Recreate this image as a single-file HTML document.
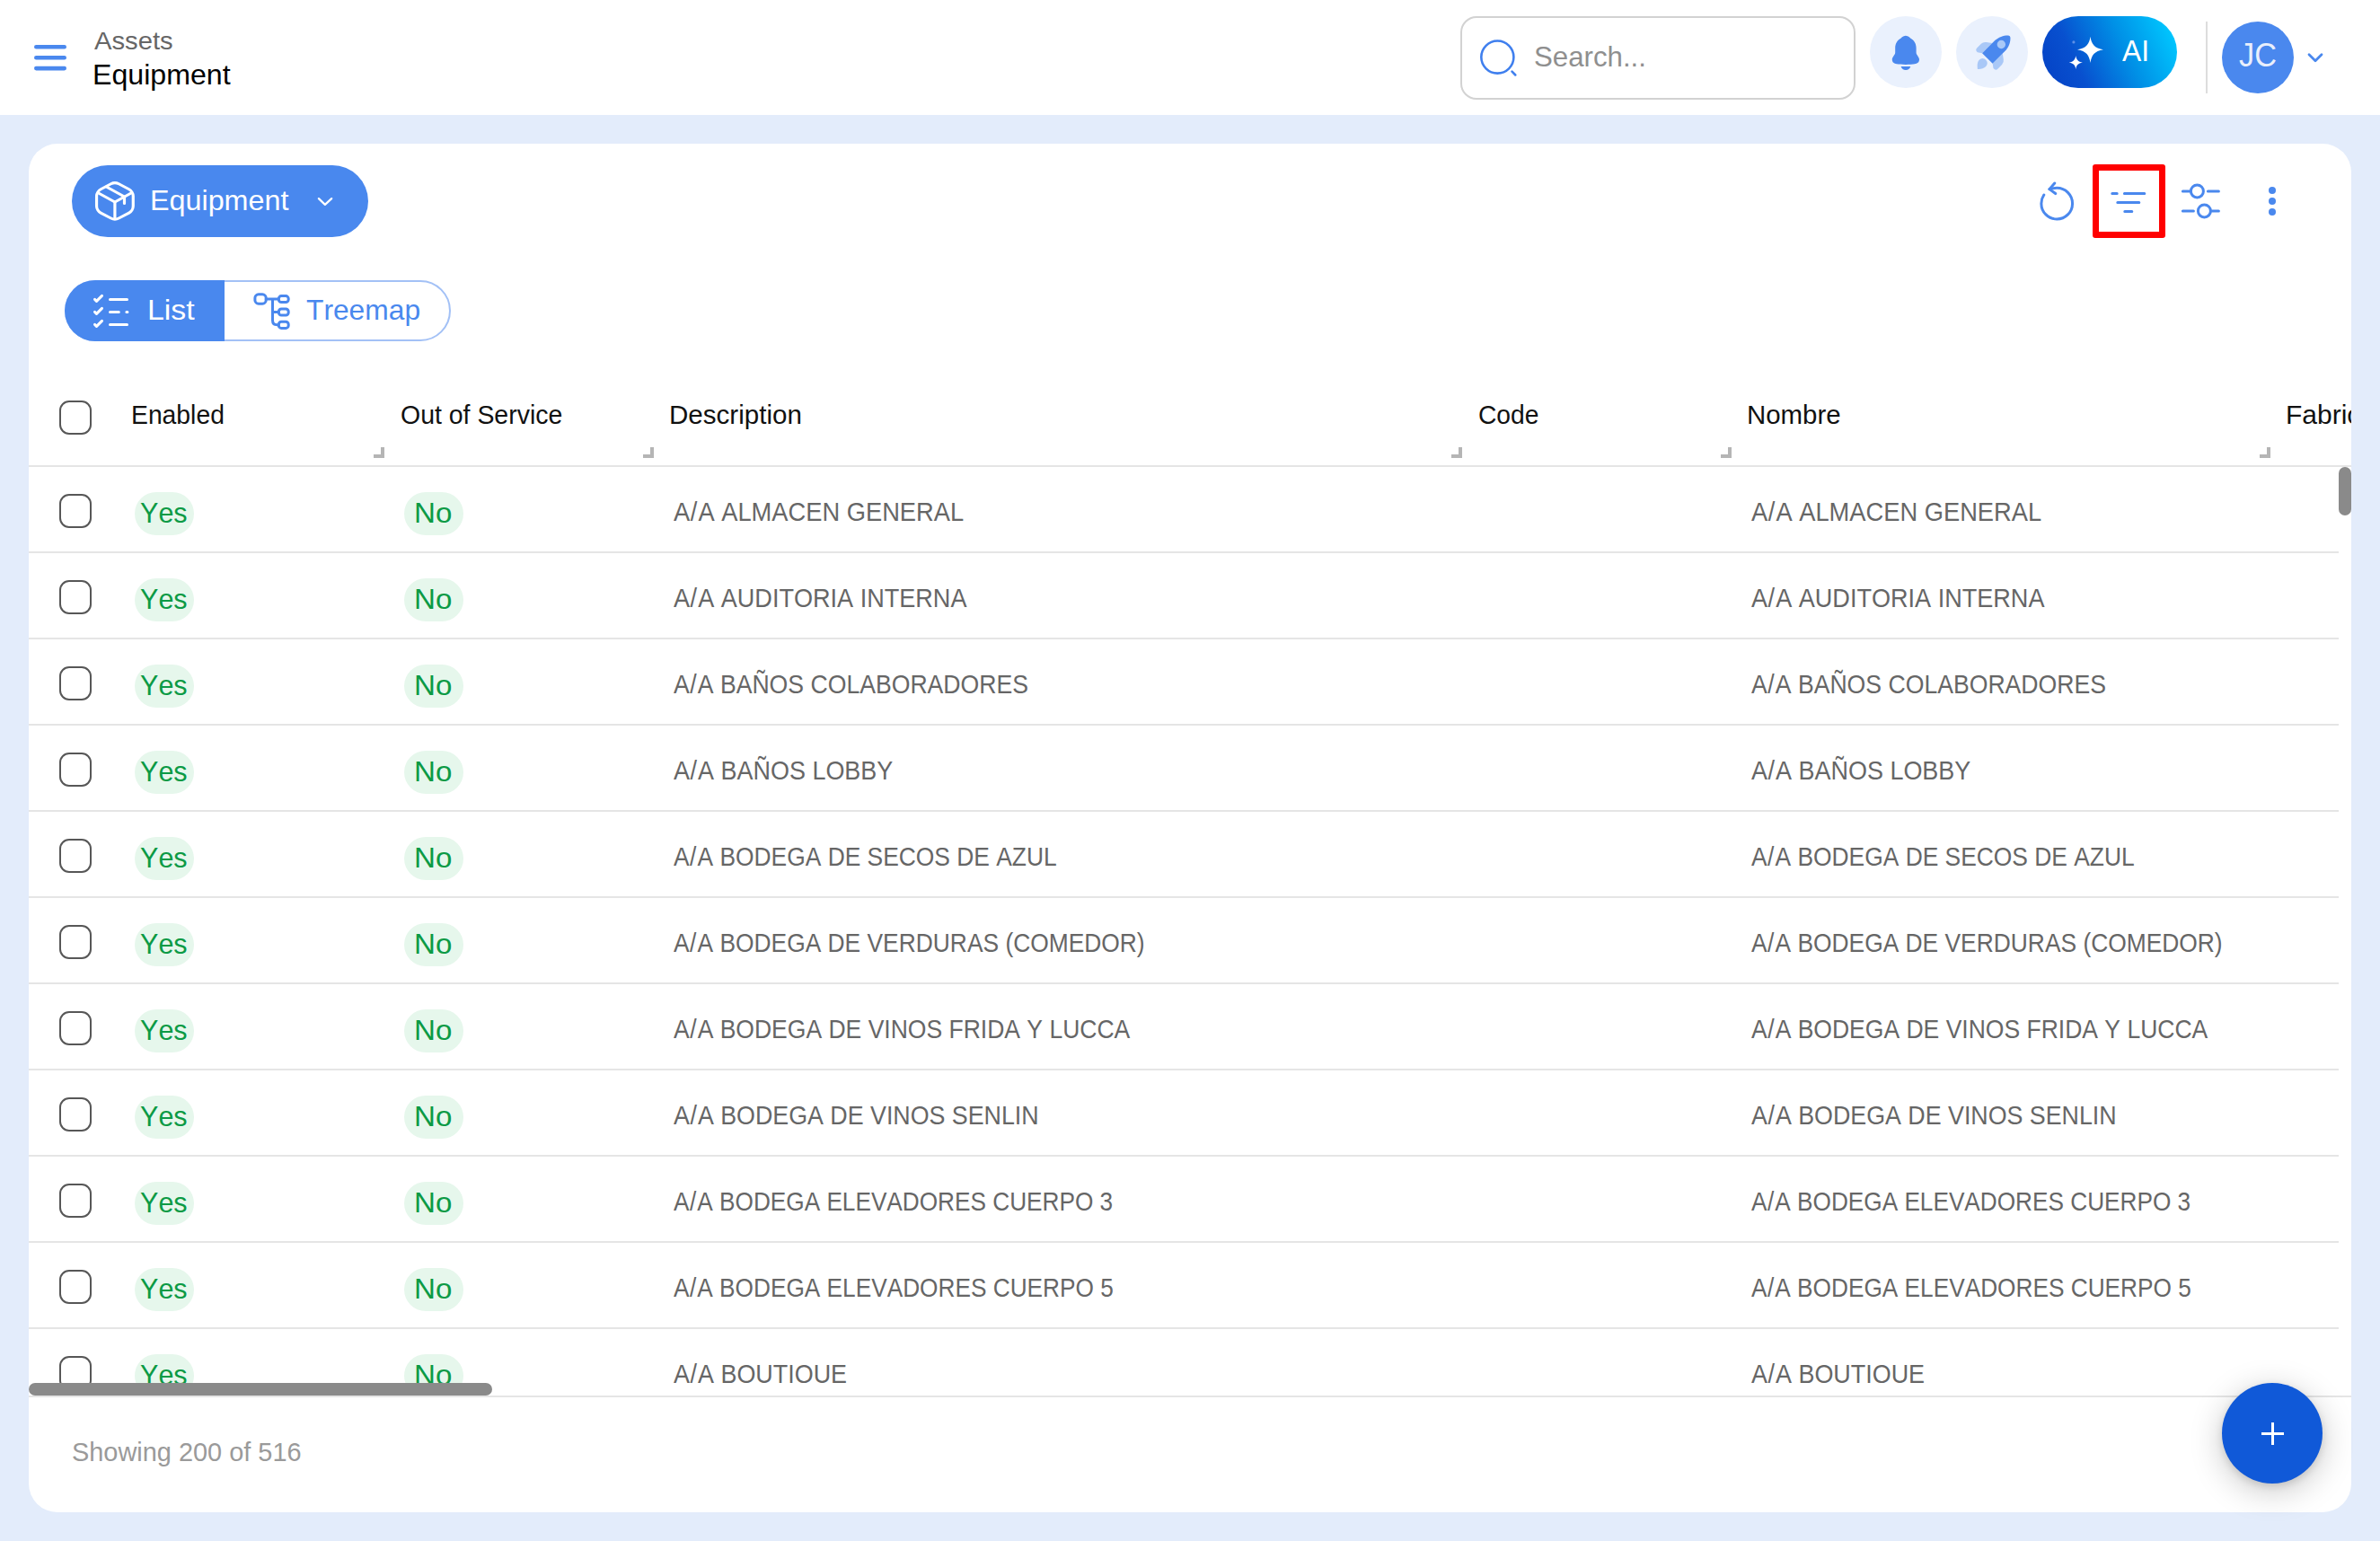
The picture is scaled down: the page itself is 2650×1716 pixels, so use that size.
<!DOCTYPE html>
<html><head><meta charset="utf-8">
<style>
html,body{margin:0;padding:0}
body{width:2650px;height:1716px;position:relative;overflow:hidden;background:#e3ecfb;font-family:"Liberation Sans",sans-serif}
.a{position:absolute}
.t{position:absolute;line-height:1;white-space:nowrap;transform-origin:0 0;font-kerning:none}
.cb{position:absolute;left:66px;width:36px;height:37.6px;box-sizing:border-box;border:2px solid #575757;border-radius:11px;background:#fff}
.pill{position:absolute;width:66px;height:48px;border-radius:24px;background:#e6f7ec}
.rb{position:absolute;left:0;width:2572px;height:2px;background:#e5e5e5}
</style></head>
<body>
<!-- top header -->
<div class="a" style="left:0;top:0;width:2650px;height:128px;background:#fff"></div>
<div class="a" style="left:1626px;top:18px;width:440px;height:93px;box-sizing:border-box;border:2px solid #d2d2d2;border-radius:18px;background:#fff"></div>
<div class="a" style="left:2082px;top:18px;width:80px;height:80px;border-radius:40px;background:#eaf1fd"></div>
<div class="a" style="left:2178px;top:18px;width:80px;height:80px;border-radius:40px;background:#eaf1fd"></div>
<div class="a" style="left:2274px;top:18px;width:150px;height:80px;border-radius:40px;background:linear-gradient(65deg,#0440c4 0%,#0850cf 27%,#0090e6 60%,#00c8ff 94%)"></div>
<div class="a" style="left:2456px;top:24px;width:2px;height:80px;background:#dddddd"></div>
<div class="a" style="left:2474px;top:24px;width:80px;height:80px;border-radius:40px;background:#4a88ee"></div>

<!-- card -->
<div class="a" style="left:32px;top:160px;width:2586px;height:1524px;border-radius:32px;background:#fff"></div>
<div class="a" style="left:80px;top:184px;width:330px;height:80px;border-radius:40px;background:#4988ee"></div>
<div class="a" style="left:72px;top:312px;width:430px;height:68px;box-sizing:border-box;border:2px solid #a3c1f6;border-radius:34px;background:#fff"></div>
<div class="a" style="left:72px;top:312px;width:178px;height:68px;border-radius:34px 0 0 34px;background:#4988ee"></div>

<!-- table header -->
<div class="cb" style="top:446px"></div>
<div class="a" style="left:32px;top:518px;width:2586px;height:2px;background:#e5e5e5"></div>

<!-- table body (clipped) -->
<div class="a" style="left:32px;top:520px;width:2572px;height:1020px;overflow:hidden">
 <div class="a" style="left:-32px;top:-520px;width:2650px;height:1716px">
  <div class="rb" style="left:32px;top:614px"></div>
  <div class="rb" style="left:32px;top:710px"></div>
  <div class="rb" style="left:32px;top:806px"></div>
  <div class="rb" style="left:32px;top:902px"></div>
  <div class="rb" style="left:32px;top:998px"></div>
  <div class="rb" style="left:32px;top:1094px"></div>
  <div class="rb" style="left:32px;top:1190px"></div>
  <div class="rb" style="left:32px;top:1286px"></div>
  <div class="rb" style="left:32px;top:1382px"></div>
  <div class="rb" style="left:32px;top:1478px"></div>
  <div class="cb" style="top:550px"></div><div class="pill" style="left:150px;top:548px"></div><div class="pill" style="left:450px;top:548px"></div>
  <div class="cb" style="top:646px"></div><div class="pill" style="left:150px;top:644px"></div><div class="pill" style="left:450px;top:644px"></div>
  <div class="cb" style="top:742px"></div><div class="pill" style="left:150px;top:740px"></div><div class="pill" style="left:450px;top:740px"></div>
  <div class="cb" style="top:838px"></div><div class="pill" style="left:150px;top:836px"></div><div class="pill" style="left:450px;top:836px"></div>
  <div class="cb" style="top:934px"></div><div class="pill" style="left:150px;top:932px"></div><div class="pill" style="left:450px;top:932px"></div>
  <div class="cb" style="top:1030px"></div><div class="pill" style="left:150px;top:1028px"></div><div class="pill" style="left:450px;top:1028px"></div>
  <div class="cb" style="top:1126px"></div><div class="pill" style="left:150px;top:1124px"></div><div class="pill" style="left:450px;top:1124px"></div>
  <div class="cb" style="top:1222px"></div><div class="pill" style="left:150px;top:1220px"></div><div class="pill" style="left:450px;top:1220px"></div>
  <div class="cb" style="top:1318px"></div><div class="pill" style="left:150px;top:1316px"></div><div class="pill" style="left:450px;top:1316px"></div>
  <div class="cb" style="top:1414px"></div><div class="pill" style="left:150px;top:1412px"></div><div class="pill" style="left:450px;top:1412px"></div>
  <div class="cb" style="top:1510px"></div><div class="pill" style="left:150px;top:1508px"></div><div class="pill" style="left:450px;top:1508px"></div>
<span class=t style="left:750.4px;top:554.8px;font-size:30px;color:#666666;transform:scaleX(0.9096);">A<span style="margin:0 1.2px 0 0.6px">/</span>A ALMACEN GENERAL</span>
<span class=t style="left:1950.4px;top:554.8px;font-size:30px;color:#666666;transform:scaleX(0.9096);">A<span style="margin:0 1.2px 0 0.6px">/</span>A ALMACEN GENERAL</span>
<span class=t style="left:156.4px;top:554.8px;font-size:32px;color:#0c9a45;transform:scaleX(0.9547);">Yes</span>
<span class=t style="left:461.4px;top:554.8px;font-size:32px;color:#0c9a45;transform:scaleX(1.0351);">No</span>
<span class=t style="left:750.4px;top:650.8px;font-size:30px;color:#666666;transform:scaleX(0.9022);">A<span style="margin:0 1.2px 0 0.6px">/</span>A AUDITORIA INTERNA</span>
<span class=t style="left:1950.4px;top:650.8px;font-size:30px;color:#666666;transform:scaleX(0.9022);">A<span style="margin:0 1.2px 0 0.6px">/</span>A AUDITORIA INTERNA</span>
<span class=t style="left:156.4px;top:650.8px;font-size:32px;color:#0c9a45;transform:scaleX(0.9547);">Yes</span>
<span class=t style="left:461.4px;top:650.8px;font-size:32px;color:#0c9a45;transform:scaleX(1.0351);">No</span>
<span class=t style="left:750.4px;top:746.8px;font-size:30px;color:#666666;transform:scaleX(0.8872);">A<span style="margin:0 1.2px 0 0.6px">/</span>A BAÑOS COLABORADORES</span>
<span class=t style="left:1950.4px;top:746.8px;font-size:30px;color:#666666;transform:scaleX(0.8872);">A<span style="margin:0 1.2px 0 0.6px">/</span>A BAÑOS COLABORADORES</span>
<span class=t style="left:156.4px;top:746.8px;font-size:32px;color:#0c9a45;transform:scaleX(0.9547);">Yes</span>
<span class=t style="left:461.4px;top:746.8px;font-size:32px;color:#0c9a45;transform:scaleX(1.0351);">No</span>
<span class=t style="left:750.4px;top:842.8px;font-size:30px;color:#666666;transform:scaleX(0.8985);">A<span style="margin:0 1.2px 0 0.6px">/</span>A BAÑOS LOBBY</span>
<span class=t style="left:1950.4px;top:842.8px;font-size:30px;color:#666666;transform:scaleX(0.8985);">A<span style="margin:0 1.2px 0 0.6px">/</span>A BAÑOS LOBBY</span>
<span class=t style="left:156.4px;top:842.8px;font-size:32px;color:#0c9a45;transform:scaleX(0.9547);">Yes</span>
<span class=t style="left:461.4px;top:842.8px;font-size:32px;color:#0c9a45;transform:scaleX(1.0351);">No</span>
<span class=t style="left:750.4px;top:938.8px;font-size:30px;color:#666666;transform:scaleX(0.8793);">A<span style="margin:0 1.2px 0 0.6px">/</span>A BODEGA DE SECOS DE AZUL</span>
<span class=t style="left:1950.4px;top:938.8px;font-size:30px;color:#666666;transform:scaleX(0.8793);">A<span style="margin:0 1.2px 0 0.6px">/</span>A BODEGA DE SECOS DE AZUL</span>
<span class=t style="left:156.4px;top:938.8px;font-size:32px;color:#0c9a45;transform:scaleX(0.9547);">Yes</span>
<span class=t style="left:461.4px;top:938.8px;font-size:32px;color:#0c9a45;transform:scaleX(1.0351);">No</span>
<span class=t style="left:750.4px;top:1034.8px;font-size:30px;color:#666666;transform:scaleX(0.8790);">A<span style="margin:0 1.2px 0 0.6px">/</span>A BODEGA DE VERDURAS (COMEDOR)</span>
<span class=t style="left:1950.4px;top:1034.8px;font-size:30px;color:#666666;transform:scaleX(0.8790);">A<span style="margin:0 1.2px 0 0.6px">/</span>A BODEGA DE VERDURAS (COMEDOR)</span>
<span class=t style="left:156.4px;top:1034.8px;font-size:32px;color:#0c9a45;transform:scaleX(0.9547);">Yes</span>
<span class=t style="left:461.4px;top:1034.8px;font-size:32px;color:#0c9a45;transform:scaleX(1.0351);">No</span>
<span class=t style="left:750.4px;top:1130.8px;font-size:30px;color:#666666;transform:scaleX(0.8835);">A<span style="margin:0 1.2px 0 0.6px">/</span>A BODEGA DE VINOS FRIDA Y LUCCA</span>
<span class=t style="left:1950.4px;top:1130.8px;font-size:30px;color:#666666;transform:scaleX(0.8835);">A<span style="margin:0 1.2px 0 0.6px">/</span>A BODEGA DE VINOS FRIDA Y LUCCA</span>
<span class=t style="left:156.4px;top:1130.8px;font-size:32px;color:#0c9a45;transform:scaleX(0.9547);">Yes</span>
<span class=t style="left:461.4px;top:1130.8px;font-size:32px;color:#0c9a45;transform:scaleX(1.0351);">No</span>
<span class=t style="left:750.4px;top:1226.8px;font-size:30px;color:#666666;transform:scaleX(0.8932);">A<span style="margin:0 1.2px 0 0.6px">/</span>A BODEGA DE VINOS SENLIN</span>
<span class=t style="left:1950.4px;top:1226.8px;font-size:30px;color:#666666;transform:scaleX(0.8932);">A<span style="margin:0 1.2px 0 0.6px">/</span>A BODEGA DE VINOS SENLIN</span>
<span class=t style="left:156.4px;top:1226.8px;font-size:32px;color:#0c9a45;transform:scaleX(0.9547);">Yes</span>
<span class=t style="left:461.4px;top:1226.8px;font-size:32px;color:#0c9a45;transform:scaleX(1.0351);">No</span>
<span class=t style="left:750.4px;top:1322.8px;font-size:30px;color:#666666;transform:scaleX(0.8730);">A<span style="margin:0 1.2px 0 0.6px">/</span>A BODEGA ELEVADORES CUERPO 3</span>
<span class=t style="left:1950.4px;top:1322.8px;font-size:30px;color:#666666;transform:scaleX(0.8730);">A<span style="margin:0 1.2px 0 0.6px">/</span>A BODEGA ELEVADORES CUERPO 3</span>
<span class=t style="left:156.4px;top:1322.8px;font-size:32px;color:#0c9a45;transform:scaleX(0.9547);">Yes</span>
<span class=t style="left:461.4px;top:1322.8px;font-size:32px;color:#0c9a45;transform:scaleX(1.0351);">No</span>
<span class=t style="left:750.4px;top:1418.8px;font-size:30px;color:#666666;transform:scaleX(0.8741);">A<span style="margin:0 1.2px 0 0.6px">/</span>A BODEGA ELEVADORES CUERPO 5</span>
<span class=t style="left:1950.4px;top:1418.8px;font-size:30px;color:#666666;transform:scaleX(0.8741);">A<span style="margin:0 1.2px 0 0.6px">/</span>A BODEGA ELEVADORES CUERPO 5</span>
<span class=t style="left:156.4px;top:1418.8px;font-size:32px;color:#0c9a45;transform:scaleX(0.9547);">Yes</span>
<span class=t style="left:461.4px;top:1418.8px;font-size:32px;color:#0c9a45;transform:scaleX(1.0351);">No</span>
<span class=t style="left:750.4px;top:1514.8px;font-size:30px;color:#666666;transform:scaleX(0.8972);">A<span style="margin:0 1.2px 0 0.6px">/</span>A BOUTIQUE</span>
<span class=t style="left:1950.4px;top:1514.8px;font-size:30px;color:#666666;transform:scaleX(0.8972);">A<span style="margin:0 1.2px 0 0.6px">/</span>A BOUTIQUE</span>
<span class=t style="left:156.4px;top:1514.8px;font-size:32px;color:#0c9a45;transform:scaleX(0.9547);">Yes</span>
<span class=t style="left:461.4px;top:1514.8px;font-size:32px;color:#0c9a45;transform:scaleX(1.0351);">No</span>
 </div>
</div>
<!-- scrollbars -->
<div class="a" style="left:2604px;top:520px;width:14px;height:54px;border-radius:7px;background:#8a8a8a"></div>
<div class="a" style="left:32px;top:1540px;width:516px;height:14px;border-radius:7px;background:#8a8a8a"></div>
<div class="a" style="left:32px;top:1554px;width:2586px;height:2px;background:#e5e5e5"></div>


<span class=t style="left:104.6px;top:31.7px;font-size:28px;color:#666666;transform:scaleX(1.0434);">Assets</span>
<span class=t style="left:102.9px;top:66.7px;font-size:32px;color:#000000;transform:scaleX(1.0040);">Equipment</span>
<span class=t style="left:1708.0px;top:46.6px;font-size:32px;color:#8f8f8f;transform:scaleX(0.9756);">Search...</span>
<span class=t style="left:2363.3px;top:39.2px;font-size:34px;color:#ffffff;transform:scaleX(0.9345);">AI</span>
<span class=t style="left:2493.0px;top:43.8px;font-size:36px;color:#e9effc;transform:scaleX(0.9524);">JC</span>
<span class=t style="left:166.6px;top:206.8px;font-size:32px;color:#ffffff;transform:scaleX(1.0093);">Equipment</span>
<span class=t style="left:163.6px;top:328.6px;font-size:32px;color:#ffffff;transform:scaleX(1.0574);">List</span>
<span class=t style="left:341.0px;top:328.6px;font-size:32px;color:#4988ee;transform:scaleX(0.9921);">Treemap</span>
<span class=t style="left:145.7px;top:446.5px;font-size:30px;color:#111111;transform:scaleX(0.9434);">Enabled</span>
<span class=t style="left:446.0px;top:446.5px;font-size:30px;color:#111111;transform:scaleX(0.9484);">Out of Service</span>
<span class=t style="left:745.3px;top:446.5px;font-size:30px;color:#111111;transform:scaleX(0.9856);">Description</span>
<span class=t style="left:1645.7px;top:446.5px;font-size:30px;color:#111111;transform:scaleX(0.9400);">Code</span>
<span class=t style="left:1945.0px;top:446.5px;font-size:30px;color:#111111;transform:scaleX(0.9808);">Nombre</span>
<span class=t style="left:2545.0px;top:446.5px;font-size:30px;color:#111111;">Fabricante</span>
<span class=t style="left:79.8px;top:1602.3px;font-size:30px;color:#9a9a9a;transform:scaleX(0.9635);">Showing 200 of 516</span>
<!-- header clip for Fabricante -->
<div class="a" style="left:2618px;top:400px;width:32px;height:120px;background:#e3ecfb"></div>


<div class="a" style="left:2330px;top:183px;width:81px;height:81.6px;box-sizing:border-box;border:7px solid #ff0000;border-radius:3px"></div>
<!-- FAB -->
<div class="a" style="left:2474px;top:1540px;width:112px;height:112px;border-radius:56px;background:#1059d8;box-shadow:0 8px 36px rgba(0,0,0,0.22),0 3px 8px rgba(0,0,0,0.12)"></div>
<div class="a" style="left:2518px;top:1594.75px;width:25px;height:3.5px;background:#fff"></div>
<div class="a" style="left:2528.75px;top:1584px;width:3.5px;height:25px;background:#fff"></div>

<!-- icons overlay -->
<svg class="a" style="left:0;top:0" width="2650" height="1716" viewBox="0 0 2650 1716" fill="none" stroke-linecap="round" stroke-linejoin="round">
 <!-- hamburger -->
 <g stroke="#4a88ee" stroke-width="4.6">
  <path d="M40.3 52.3H71.7M40.3 64.3H71.7M40.3 76.1H71.7"/>
 </g>
 <!-- search -->
 <g transform="translate(1645.5,41.7) scale(1.9)" stroke="#3f7fee" stroke-width="1.35">
  <circle cx="11.5" cy="11.5" r="9.5"/><path d="M22 22L20 20"/>
 </g>
 <!-- bell -->
 <path fill="#4a88ee" d="M2121.9 39.8C2118.6 40.3 2117.4 41.6 2116.7 42.6C2112.3 45 2110.2 49 2110.2 53.5L2110.2 58.6C2110.2 61.2 2106.8 63.5 2106.8 66.2C2106.8 69.4 2109 70.8 2112 71.3C2116 72.1 2127.8 72.1 2131.8 71.3C2134.8 70.8 2137 69.4 2137 66.2C2137 63.5 2133.6 61.2 2133.6 58.6L2133.6 53.5C2133.6 49 2131.5 45 2127.1 42.6C2126.4 41.6 2125.2 40.3 2121.9 39.8Z"/>
 <path fill="#4a88ee" d="M2116.6 74L2127.3 74C2126.5 76.6 2124.5 78.1 2121.95 78.1C2119.4 78.1 2117.4 76.6 2116.6 74Z"/>
 <!-- rocket -->
 <g transform="translate(2212.85,65) rotate(45)">
  <path fill="#a9c8f7" d="M-8.2 -15.8L-13.6 -11.8Q-16.4 -9.8 -16.4 -6.5L-16.4 -0.2Q-16.4 3.4 -12.5 3.1L-8.2 0Z"/>
  <path fill="#a9c8f7" d="M8.2 -15.8L13.6 -11.8Q16.4 -9.8 16.4 -6.5L16.4 -0.2Q16.4 3.4 12.5 3.1L8.2 0Z"/>
  <path fill="#a9c8f7" d="M0.8 16.2C-2.5 13.5 -5.3 10.8 -5.3 7.6A5.3 5.3 0 0 1 5.3 7.6C5.3 11 3.5 13.8 0.8 16.2Z"/>
  <path fill="#4a88ee" d="M-8.2 0L-8.2 -19C-8.2 -26 -5 -31.5 -1.6 -34.6Q0 -36 1.6 -34.6C5 -31.5 8.2 -26 8.2 -19L8.2 0Z"/>
  <circle fill="#a9c8f7" cx="0" cy="-21.9" r="4.7"/>
 </g>
 <!-- sparkles -->
 <g fill="#fff">
  <path transform="translate(2327.5,55.3)" d="M0 -14.6C1.2 -6.5 4.5 -1.6 14.5 0C4.5 1.6 1.2 6.5 0 14.6C-1.2 6.5 -4.5 1.6 -14.5 0C-4.5 -1.6 -1.2 -6.5 0 -14.6Z"/>
  <path transform="translate(2311.3,69.6) scale(1.06)" d="M0 -7.2C0.6 -3.2 2.2 -0.8 7.2 0C2.2 0.8 0.6 3.2 0 7.2C-0.6 3.2 -2.2 0.8 -7.2 0C-2.2 -0.8 -0.6 -3.2 0 -7.2Z"/>
 </g>
 <circle cx="2308.9" cy="46.9" r="1.6" fill="#5d8fe6"/>
 <!-- avatar chevron -->
 <path d="M2571 60.8L2578 67.8L2585 60.8" stroke="#4a88ee" stroke-width="2.8"/>

 <!-- equipment button icons -->
 <g transform="translate(102.5,199.8) scale(2.117,2.009)" stroke="#fff" stroke-width="1.5">
  <path d="M3.17 7.44L12 12.55L20.77 7.47"/><path d="M12 21.61V12.54"/>
  <path d="M9.93 2.48L4.59 5.45C3.38 6.12 2.39 7.8 2.39 9.18V14.83C2.39 16.21 3.38 17.89 4.59 18.56L9.93 21.53C11.07 22.16 12.94 22.16 14.08 21.53L19.42 18.56C20.63 17.89 21.62 16.21 21.62 14.83V9.18C21.62 7.8 20.63 6.12 19.42 5.45L14.08 2.48C12.93 1.84 11.07 1.84 9.93 2.48Z"/>
  <path d="M17 13.24V9.58L7.51 4.1"/>
 </g>
 <path d="M354.9 221.1L361.9 227.8L369.2 221.1" stroke="#fff" stroke-width="2.3"/>
 <!-- list icon -->
 <g transform="translate(99.5,324.4) scale(2)" stroke="#fff" stroke-width="1.5">
  <path d="M11.5 4.5H21M11.5 11.5H16.4M20.7 11.5H21.2M11.5 18.5H21M3 4.5L4 5.5L7 2.5M3 11.5L4 12.5L7 9.5M3 18.5L4 19.5L7 16.5"/>
 </g>
 <!-- treemap icon -->
 <g stroke="#4a88ee" stroke-width="3">
  <rect x="283.9" y="327.8" width="12.3" height="10.4" rx="4"/>
  <rect x="310.3" y="329.6" width="10.9" height="6.9" rx="3"/>
  <rect x="310.3" y="343.9" width="10.9" height="7.1" rx="3"/>
  <rect x="310.3" y="358.3" width="10.9" height="7.1" rx="3"/>
  <path d="M296.2 333H310.3M303.5 333V356.8Q303.5 361.8 308.5 361.8H310.3M303.5 347.5H310.3"/>
 </g>

 <!-- toolbar -->
 <g transform="translate(2266.2,200) scale(2)" stroke="#4a88ee" stroke-width="1.5">
  <path d="M9.11 5.08C9.98 4.82 10.94 4.65 12 4.65C16.79 4.65 20.67 8.53 20.67 13.32C20.67 18.11 16.79 21.99 12 21.99C7.21 21.99 3.33 18.11 3.33 13.32C3.33 11.54 3.87 9.88 4.79 8.5"/>
  <path d="M7.87 5.32L10.76 2"/><path d="M7.87 5.32L11.24 7.78"/>
 </g>
 <g transform="translate(2345.8,201.4) scale(2)" stroke="#4a88ee" stroke-width="1.5">
  <path d="M3 7H5.7M9.8 7H21M6 12H18M10 17H14"/>
 </g>
 <g transform="translate(2426.4,199.9) scale(2)" stroke="#4a88ee" stroke-width="1.5">
  <path d="M22 6.5H16M6 6.5H2M22 17.5H18M8 17.5H2"/>
  <circle cx="10" cy="6.5" r="3.5"/><circle cx="14" cy="17.5" r="3.5"/>
 </g>
 <g fill="#4a88ee"><circle cx="2530" cy="211.9" r="4"/><circle cx="2530" cy="224" r="4"/><circle cx="2530" cy="236.1" r="4"/></g>
 

 <!-- resize handles -->
 <g fill="#b5b5b5">
  <path d="M424 498H428V510H416V506H424Z"/>
  <path d="M724 498H728V510H716V506H724Z"/>
  <path d="M1624 498H1628V510H1616V506H1624Z"/>
  <path d="M1924 498H1928V510H1916V506H1924Z"/>
  <path d="M2524 498H2528V510H2516V506H2524Z"/>
 </g>
</svg>
</body></html>
